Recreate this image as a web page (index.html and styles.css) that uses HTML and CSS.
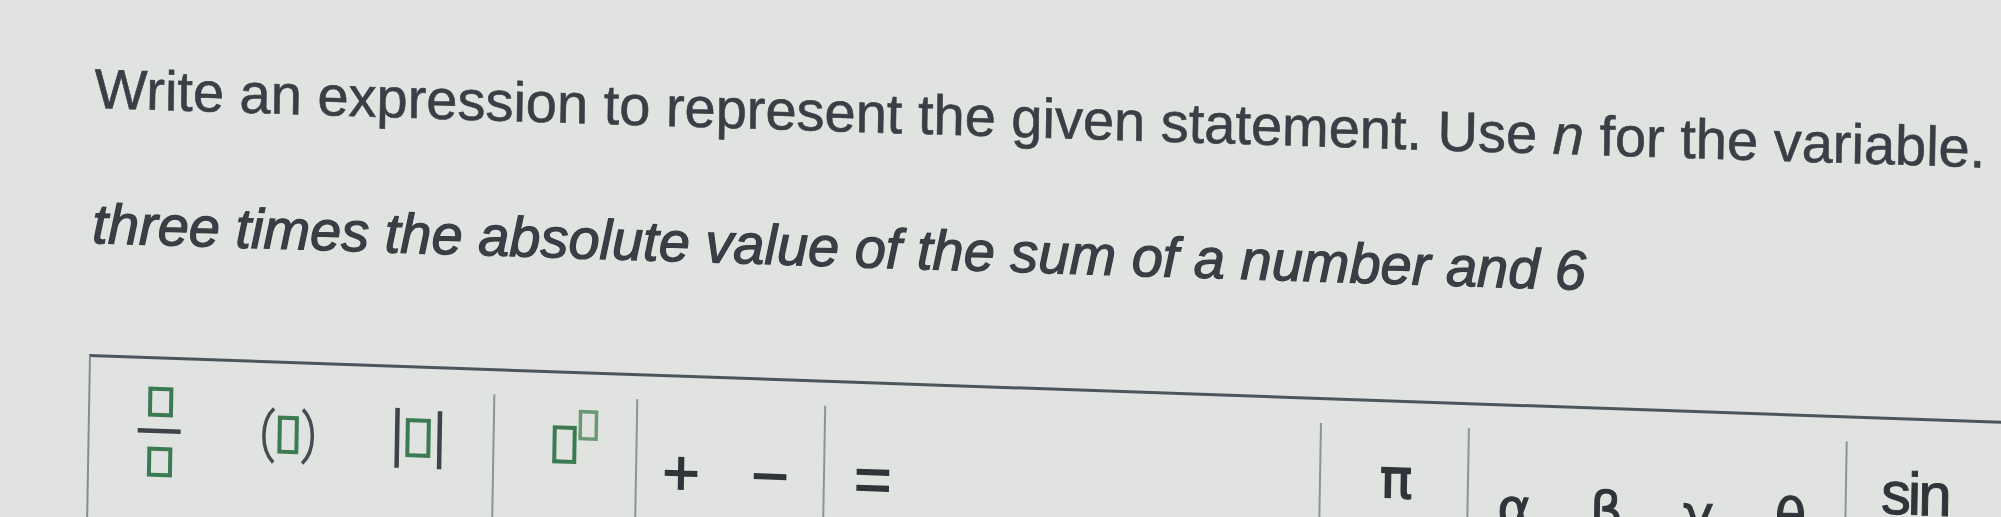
FILE: index.html
```
<!DOCTYPE html>
<html lang="en">
<head>
<meta charset="utf-8">
<title>Expression</title>
<link rel="stylesheet" href="styles.css">
</head>
<body>
<div class="page">
  <div class="question">
    <p class="prompt">Write an expression to represent the given statement. Use <i>n</i> for the variable.</p>
    <p class="statement">three times the absolute value of the sum of a number and 6</p>
  </div>
  <div class="toolbar">
    <div class="group g1">
      <div class="key key-frac" title="fraction">
        <svg width="48" height="96" viewBox="0 0 48 96">
          <rect class="slot" x="15" y="4.5" width="21" height="26"/>
          <line class="bar" x1="3" y1="46.5" x2="46" y2="46.5"/>
          <rect class="slot" x="15" y="64.5" width="21" height="26"/>
        </svg>
      </div>
      <div class="key key-paren" title="parentheses">
        <svg width="58" height="56" viewBox="0 0 58 56">
          <path class="curve" d="M14 1 C1 14 1 42 14 55"/>
          <rect class="slot" x="20" y="10" width="17" height="34"/>
          <path class="curve" d="M43 1 C56 14 56 42 43 55"/>
        </svg>
      </div>
      <div class="key key-abs" title="absolute value">
        <svg width="48" height="61" viewBox="0 0 48 61">
          <line class="bar" x1="2.5" y1="0" x2="2.5" y2="60"/>
          <rect class="slot" x="13" y="12" width="21" height="35"/>
          <line class="bar" x1="45" y1="2" x2="45" y2="60"/>
        </svg>
      </div>
    </div>
    <div class="group g2">
      <div class="key key-sup" title="exponent">
        <svg width="47" height="56" viewBox="0 0 47 56">
          <rect class="slot" x="3" y="18" width="20" height="34"/>
          <rect class="slot slot-light" x="28.5" y="1.5" width="16" height="27"/>
        </svg>
      </div>
    </div>
    <div class="group g3">
      <div class="key key-op">+</div>
      <div class="key key-op">−</div>
    </div>
    <div class="group g4">
      <div class="key key-op">=</div>
    </div>
    <div class="group g5">
      <div class="key key-pi">π</div>
    </div>
    <div class="group g6">
      <div class="key key-greek">α</div>
      <div class="key key-greek">β</div>
      <div class="key key-greek">γ</div>
      <div class="key key-greek">θ</div>
    </div>
    <div class="group g7">
      <div class="key key-fn">sin</div>
    </div>
  </div>
</div>
</body>
</html>
```
FILE: styles.css
```
html, body {
  margin: 0;
  height: 517px;
  overflow: hidden;
  background: #e0e3e0;
}

.page {
  padding-top: 57px;
}

.question {
  margin-left: 95px;
  transform-origin: 0 0;
  transform: rotate(0.9deg) skewY(0.9deg);
  font-family: "Liberation Sans", Arial, sans-serif;
  font-size: 56px;
  line-height: 64px;
  color: #3a3f45;
  white-space: nowrap;
}

.prompt {
  margin: 0;
  -webkit-text-stroke: 0.6px #3a3f45;
}

.statement {
  margin: 71px 0 0;
  font-style: italic;
  -webkit-text-stroke: 1.2px #363b41;
}

.toolbar {
  margin: 98px 0 0 89px;
  width: 2100px;
  height: 300px;
  border-top: 3px solid #4b565c;
  border-left: 2px solid #868d92;
  display: flex;
  transform-origin: 0 0;
  transform: rotate(1deg) skewY(1deg);
}

.group {
  flex: none;
  box-sizing: border-box;
  margin-top: 23px;
  height: 260px;
  display: flex;
  align-items: flex-start;
  border-left: 2px solid #8d9499;
}

.g1 { border-left: 0; width: 403px; padding-left: 37px; gap: 66px; }
.g2 { width: 143px; padding-left: 48px; }
.g3 { width: 188px; padding-left: 12px; gap: 25px; }
.g4 { width: 496px; padding-left: 16px; }
.g5 { width: 148px; padding-left: 43px; }
.g6 { width: 378px; padding-left: 14px; gap: 28px; }
.g7 { flex: 1; padding-left: 28px; }

.key {
  flex: none;
  width: 64px;
  display: flex;
  justify-content: center;
  color: #30353a;
}

.key svg {
  display: block;
  overflow: visible;
}

.slot {
  fill: none;
  stroke: #3b7a52;
  stroke-width: 4;
}

.slot-light {
  stroke: #6a9a73;
  stroke-width: 3.5;
}

.bar {
  stroke: #3f444a;
  stroke-width: 4.5;
}

.curve {
  fill: none;
  stroke: #474c52;
  stroke-width: 3.5;
}

.key-frac { padding-top: 2px; }
.key-paren { padding-top: 21px; }
.key-abs { padding-top: 17px; }
.key-sup { padding-top: 13px; }

.key-op {
  font-family: "Liberation Sans", Arial, sans-serif;
  font-size: 64px;
  line-height: 64px;
  padding-top: 40px;
  -webkit-text-stroke: 1.5px #30353a;
}

.key-pi {
  font-family: "DejaVu Sans", sans-serif;
  font-size: 54px;
  line-height: 54px;
  padding-top: 27px;
  -webkit-text-stroke: 1.5px #30353a;
}

.key-greek {
  font-family: "DejaVu Sans", sans-serif;
  font-size: 52px;
  line-height: 52px;
  padding-top: 52px;
  -webkit-text-stroke: 1px #30353a;
}

.key-fn {
  width: 80px;
  font-family: "Liberation Sans", Arial, sans-serif;
  font-size: 60px;
  line-height: 60px;
  padding-top: 21px;
  letter-spacing: -3px;
  -webkit-text-stroke: 1px #30353a;
}
```
